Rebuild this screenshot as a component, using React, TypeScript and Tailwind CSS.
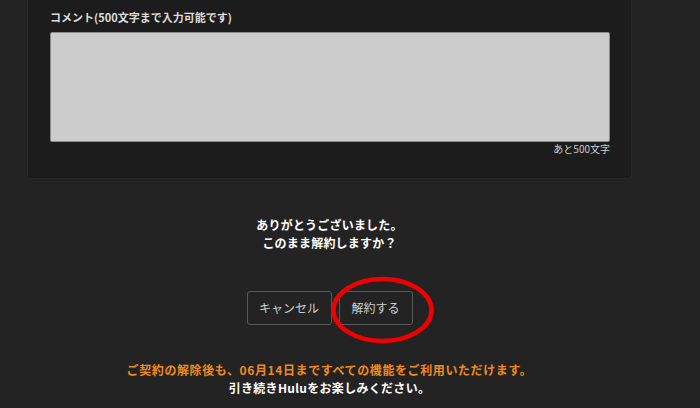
import React from 'react';

const font = { fontFamily: '"Noto Sans CJK JP", "Noto Sans", sans-serif' };

const CancelConfirm: React.FC = () => {
  return (
    <div className="h-[408px] w-[700px] overflow-hidden bg-[#232323] text-white" style={font}>
      <div className="ml-[27px] flex w-[605px] flex-col items-center">
        <div className="w-full rounded-b-[3px] border border-t-0 border-[#282828] bg-[#1c1c1c] pt-[10px] pr-[21px] pb-[22px] pl-[22px]">
          <p className="mb-[8px] text-[11px] leading-[14px] font-bold text-[#dcdcdc]">コメント(500文字まで入力可能です)</p>
          <textarea className="block h-[110px] w-full resize-none rounded-[2px] border border-[#8a8a8a] bg-[#cccccc] outline-none" />
          <p className="text-right text-[10px] leading-[14px] text-[#cfcfcf]">あと500文字</p>
        </div>

        <div className="mt-[37px] text-center text-[12px] leading-[18px] font-bold tracking-[0.2px]">
          <p>ありがとうございました。</p>
          <p>このまま解約しますか？</p>
        </div>

        <div className="mt-[39px] flex gap-[7px]">
          <button className="h-[34px] w-[85px] rounded-[3px] border border-[#595959] text-[12px] text-[#d0d0d0]">キャンセル</button>
          <div className="relative">
            <button className="h-[34px] w-[74px] rounded-[3px] border border-[#595959] text-[12px] text-[#d0d0d0]">解約する</button>
            <svg className="pointer-events-none absolute top-[-15px] left-[-9px]" width="106" height="70" viewBox="0 0 106 70">
              <ellipse cx="52.5" cy="34" rx="49" ry="31" fill="none" stroke="#f00000" strokeWidth="4.5" />
            </svg>
          </div>
        </div>

        <div className="mt-[36px] text-center text-[12px] leading-[18px] font-bold">
          <p className="tracking-[0.6px] text-[#f08a1f]">ご契約の解除後も、06月14日まですべての機能をご利用いただけます。</p>
          <p className="tracking-[0.3px]">引き続きHuluをお楽しみください。</p>
        </div>
      </div>
    </div>
  );
};

export default CancelConfirm;
